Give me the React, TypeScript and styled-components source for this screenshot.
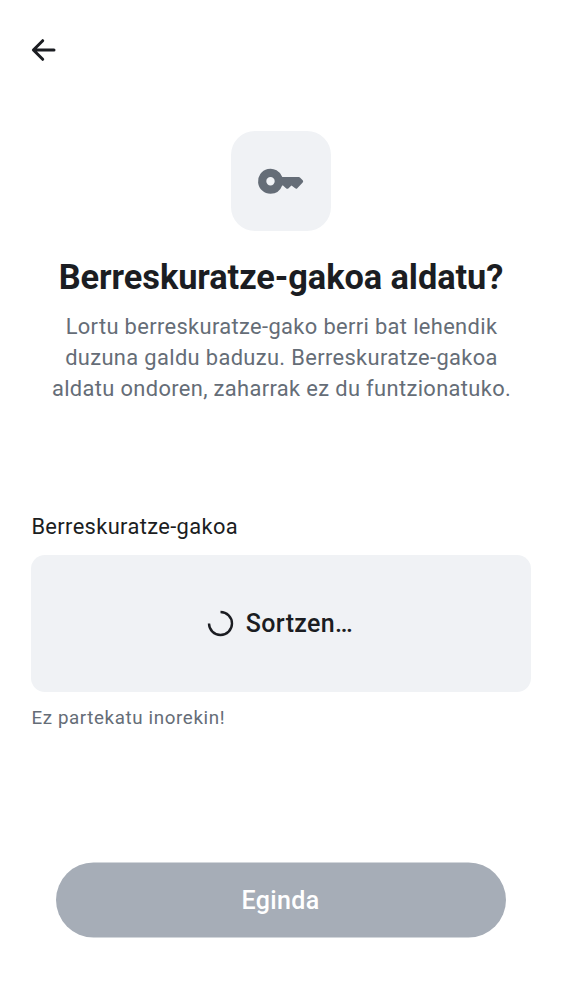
import React from 'react';
import styled, { createGlobalStyle } from 'styled-components';

const GlobalStyle = createGlobalStyle`
  * { box-sizing: border-box; }
  body { margin: 0; background: #fff; font-family: Roboto, sans-serif; color: #1b1d22; }
`;

const Screen = styled.main`
  display: flex;
  flex-direction: column;
  height: 1000px;
  padding: 34px 31px 63px;
`;

const BackButton = styled.button`
  display: flex;
  width: 31px;
  height: 31px;
  margin-left: -3px;
  padding: 0;
  border: 0;
  background: none;
  color: inherit;
`;

const Header = styled.header`
  display: flex;
  flex-direction: column;
  align-items: center;
  margin-top: 66px;
`;

const KeyTile = styled.div`
  display: flex;
  align-items: center;
  justify-content: center;
  width: 100px;
  height: 100px;
  border-radius: 24px;
  background: #f0f2f5;
  color: #656d77;
`;

const Title = styled.h1`
  margin: 26px 0 0;
  font-size: 34.375px;
  line-height: 40px;
  font-weight: 700;
  letter-spacing: -0.07px;
  white-space: nowrap;
`;

const Description = styled.p`
  margin: 14px 0 0;
  padding-left: 1px;
  font-size: 21.875px;
  line-height: 31px;
  letter-spacing: 0.36px;
  text-align: center;
  white-space: nowrap;
  color: #656d77;
`;

const Field = styled.section`
  display: flex;
  flex-direction: column;
  margin-top: 107px;
`;

const Label = styled.h2`
  margin: 0;
  padding-left: 0.4px;
  font-size: 21.875px;
  line-height: 31px;
  font-weight: 400;
  letter-spacing: 0.36px;
`;

const KeyBox = styled.div`
  display: flex;
  align-items: center;
  justify-content: center;
  gap: 12px;
  height: 137px;
  margin-top: 13px;
  padding-right: 2px;
  border-radius: 14px;
  background: #f0f2f5;
  font-size: 25px;
  font-weight: 500;
  letter-spacing: 0.36px;
`;

const Hint = styled.p`
  margin: 14px 0 0;
  padding-left: 0.4px;
  font-size: 18.75px;
  line-height: 25px;
  letter-spacing: 0.625px;
  color: #656d77;
`;

const DoneButton = styled.button`
  height: 75px;
  margin: auto 25px 0;
  padding: 0 1px 0 0;
  border: 0;
  border-radius: 38px;
  background: #a6adb7;
  color: #fff;
  font: 500 25px Roboto, sans-serif;
  letter-spacing: 0.36px;
  transform: translateY(0.5px);
`;

export default function App() {
  return (
    <Screen>
      <GlobalStyle />
      <BackButton aria-label="Atzera">
        <svg width="31" height="31" viewBox="0 0 31 31" fill="none" stroke="currentColor" strokeWidth="3" strokeLinecap="round" strokeLinejoin="round">
          <path d="M26 16H5.5M14.7 6.7 5.4 16l9.3 9.3" />
        </svg>
      </BackButton>
      <Header>
        <KeyTile>
          <svg width="50" height="50" viewBox="0 0 50 50" fill="currentColor">
            <path fillRule="evenodd" d="M14.5 37.8a12.5 12.5 0 1 1 11.8-16.7H42.7q.9 0 1.5.6l2.5 2.6q1 1.1 0 2.2L41.3 32.2q-1 1-2.1.1L35.5 29.6 32.3 32.4q-1 .8-2 0L27 29.6H26.2A12.5 12.5 0 0 1 14.5 37.8Zm0-8.3a4.2 4.2 0 1 0 0-8.4 4.2 4.2 0 0 0 0 8.4Z" />
          </svg>
        </KeyTile>
        <Title>Berreskuratze-gakoa aldatu?</Title>
        <Description>
          Lortu berreskuratze-gako berri bat lehendik<br />
          duzuna galdu baduzu. Berreskuratze-gakoa<br />
          aldatu ondoren, zaharrak ez du funtzionatuko.
        </Description>
      </Header>
      <Field>
        <Label>Berreskuratze-gakoa</Label>
        <KeyBox role="status">
          <svg width="27" height="27" viewBox="0 0 27 27" fill="none" stroke="currentColor" strokeWidth="2.4">
            <path d="M13.5 2a11.5 11.5 0 1 1-11.5 11.5" />
          </svg>
          Sortzen…
        </KeyBox>
        <Hint>Ez partekatu inorekin!</Hint>
      </Field>
      <DoneButton disabled>Eginda</DoneButton>
    </Screen>
  );
}
